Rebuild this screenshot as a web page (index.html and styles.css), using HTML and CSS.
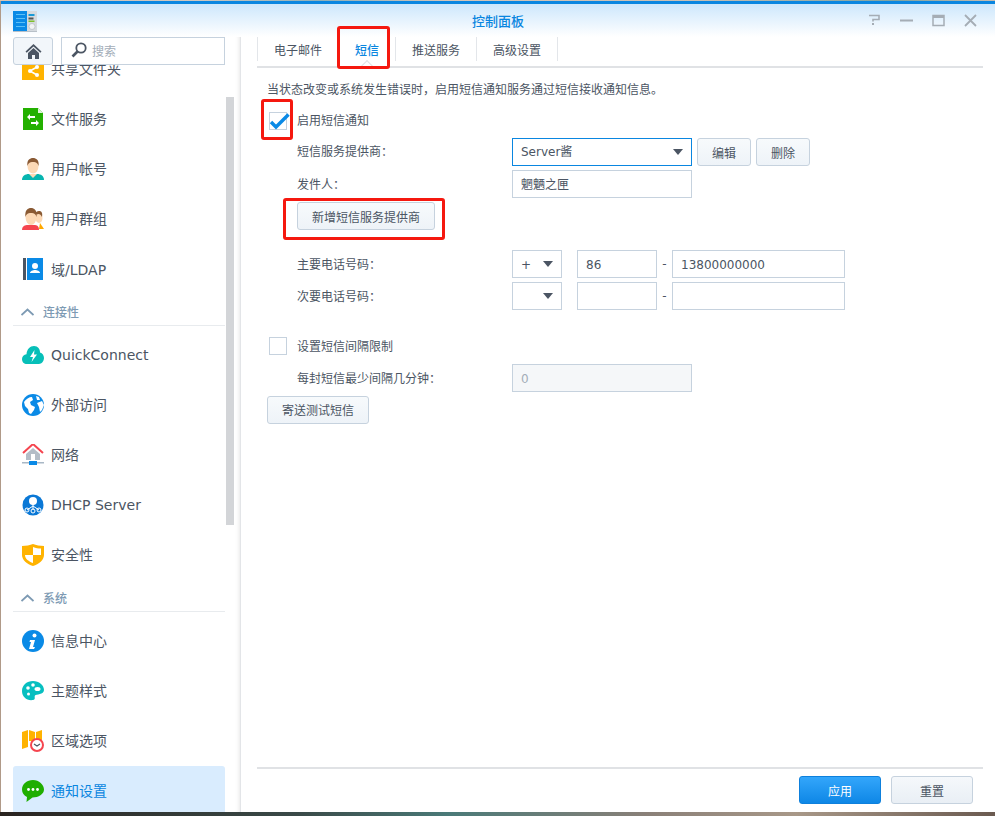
FILE: index.html
```html
<!DOCTYPE html>
<html lang="zh-CN">
<head>
<meta charset="utf-8">
<title>控制面板</title>
<link rel="stylesheet" href="styles.css">
</head>
<body>
<div class="window">
  <header class="titlebar">
    <svg class="app-icon" width="24" height="21" viewBox="0 0 24 21"><rect x="0" y="0" width="14" height="20" fill="#0a8ae6"/><path d="M3 3.500h9M3 7.500h9M3 11.500h9M3 15.500h9" stroke="#5cc0f7" stroke-width="1"/><rect x="14" y="0" width="10" height="20" fill="#d5dadf"/><rect x="15.500" y="3" width="6" height="2" fill="#1a9ad6"/><rect x="15.500" y="6.500" width="5" height="2" fill="#555"/><rect x="15.500" y="9.500" width="6" height="1.500" fill="#7fbf2a"/><circle cx="19" cy="15.500" r="3" fill="#f2f4f5" stroke="#aab2b8" stroke-width=".6"/><rect y="20" width="24" height="1" fill="#b8c0c8"/></svg>
    <h1 class="title">控制面板</h1>
    <div class="win-btns">
      <svg width="13" height="13" viewBox="0 0 13 13"><path d="M1 1.500h10v4H5v2" fill="none" stroke="#a5adb5" stroke-width="1.600"/><rect x="4" y="9" width="2" height="2" fill="#a5adb5"/></svg>
      <svg width="13" height="13" viewBox="0 0 13 13"><path d="M0 6.500h13" stroke="#a5adb5" stroke-width="2"/></svg>
      <svg width="13" height="13" viewBox="0 0 13 13"><path d="M1 1.500h11v10H1z" fill="none" stroke="#a5adb5" stroke-width="1.500"/><rect x="1" y="1" width="11" height="3" fill="#a5adb5"/></svg>
      <svg width="13" height="13" viewBox="0 0 13 13"><path d="M1 1l11 11M12 1L1 12" stroke="#a5adb5" stroke-width="1.800"/></svg>
    </div>
  </header>
  <div class="body">
    <aside class="sidebar">
      <div class="side-col">
        <div class="side-top">
          <button class="home" type="button"><svg width="17" height="17" viewBox="0 0 17 17"><path d="M8.500 1L0.500 8.500l1.200 1.200L8.500 3.500l6.800 6.200 1.200-1.200z" fill="#4b5563"/><path d="M3 10l5.500-5L14 10v6H10v-4H7v4H3z" fill="#4b5563"/></svg></button>
          <div class="search">
            <svg width="16" height="16" viewBox="0 0 16 16"><circle cx="10" cy="6" r="4.700" fill="none" stroke="#4b5563" stroke-width="1.800"/><path d="M6.500 9.500L1.500 14.500" stroke="#4b5563" stroke-width="2.600"/></svg>
            <span>搜索</span>
          </div>
        </div>
        <nav class="side-list">
          <a class="item first"><svg class="ico" width="22" height="22" viewBox="0 0 22 22"><rect y="0" width="22" height="22" fill="#ffb300"/><path d="M8 13l7-4M8 13l7 4" stroke="#fff" stroke-width="1.500"/><circle cx="8" cy="13" r="2" fill="#fff"/><circle cx="15" cy="9" r="2" fill="#fff"/><circle cx="15" cy="17" r="2" fill="#fff"/></svg><span class="t">共享文件夹</span></a>
          <a class="item"><svg class="ico" width="22" height="22" viewBox="0 0 22 22"><path d="M1 0h15l5 5v17H1z" fill="#23b000"/><path d="M16 0l5 5h-5z" fill="#dff3d8"/><path d="M5 9l3-3v2h5v2H8v2zM17 15l-3-3v2H9v2h5v2z" fill="#fff"/></svg><span class="t">文件服务</span></a>
          <a class="item"><svg class="ico" width="22" height="22" viewBox="0 0 22 22"><path d="M0 22c0-4 3-6 7-6h8c4 0 7 2 7 6z" fill="#07b5b0"/><path d="M7 16h8l-4 4z" fill="#fcd9b6"/><ellipse cx="11" cy="8" rx="5.500" ry="7.500" fill="#fcd9b6"/><path d="M5.500 8C4.500 2 8 0 11 0s6.500 2 5.500 8c-1-3-2-4-5.500-4S6.500 5 5.500 8z" fill="#8a5a34"/></svg><span class="t">用户帐号</span></a>
          <a class="item"><svg class="ico" width="22" height="22" viewBox="0 0 22 22"><ellipse cx="17" cy="10" rx="3.500" ry="5" fill="#fcd9b6"/><path d="M13 7c0-3 2-4 4-4s4 1 3 6c-1-2-2-3-3.500-3S14 7 13 7z" fill="#8a5a34"/><path d="M17 21l1-6 4 6z" fill="#ffa800"/><path d="M0 22c0-4 3-5 6-5h6c3 0 5 1 5 5z" fill="#f5454f"/><ellipse cx="9" cy="9" rx="5.500" ry="8" fill="#fcd9b6"/><path d="M3.500 9C2.500 2 6 0 9 0s6.500 2 5.500 9c-1-3-2-4-5.500-4S4.500 6 3.500 9z" fill="#8a5a34"/></svg><span class="t">用户群组</span></a>
          <a class="item"><svg class="ico" width="22" height="22" viewBox="0 0 22 22"><rect x="1" width="3" height="22" fill="#4b5563"/><rect x="5" width="16" height="22" fill="#0a8ae6"/><circle cx="13" cy="8" r="3" fill="#fff"/><path d="M8 15c0-2 3-3 5-3s5 1 5 3z" fill="#fff"/></svg><span>域/LDAP</span></a>
          <div class="group"><svg width="13" height="8" viewBox="0 0 13 8"><path d="M.5 7l6-5.500 6 5.500" fill="none" stroke="#7d9ab3" stroke-width="1.800"/></svg><span>连接性</span></div>
          <a class="item"><svg class="ico" width="22" height="22" viewBox="0 0 22 22"><path d="M5 20c-3 0-5-2-5-5 0-2.500 2-4.500 4.500-4.800C5 5 8 2 12 2c4 0 6 3 6 6.500 2.500.5 4 3 4 5.500 0 3-2.500 6-5 6z" fill="#07bfb8"/><path d="M12.500 6L8 13h3l-1.500 5L15 10.500h-3z" fill="#fff"/></svg><span>QuickConnect</span></a>
          <a class="item"><svg class="ico" width="22" height="22" viewBox="0 0 22 22"><circle cx="11" cy="11" r="11" fill="#0a8ae6"/><path d="M2 8c2-3 5-5 8-5l1 3-3 2 1 3 4 2-1 3-3 4-2-1-1-4-3-3zM14 2l3 1 1 3-3 0zM15 9l5-2 2 4-2 5-2 2-1-5z" fill="#fff"/></svg><span class="t">外部访问</span></a>
          <a class="item"><svg class="ico" width="22" height="22" viewBox="0 0 22 22"><path d="M1 9l10-9 10 9" fill="none" stroke="#f5454f" stroke-width="2"/><path d="M4 10l7-6 7 6v6H4z" fill="#b4bdc7"/><rect x="9" y="10" width="4" height="6" fill="#fff"/><rect y="18" width="22" height="1.500" fill="#a9b8c6"/><rect x="7" y="17" width="8" height="4" fill="#0a8ae6"/></svg><span class="t">网络</span></a>
          <a class="item"><svg class="ico" width="22" height="22" viewBox="0 0 22 22"><circle cx="11" cy="11" r="10.500" fill="#0a78d6"/><circle cx="11" cy="7" r="4" fill="#fff"/><path d="M11 10v6M5 16l6-4 6 4" stroke="#fff" fill="none"/><circle cx="5" cy="16" r="2" fill="none" stroke="#fff"/><circle cx="11" cy="17" r="2" fill="none" stroke="#fff"/><circle cx="17" cy="16" r="2" fill="none" stroke="#fff"/></svg><span>DHCP Server</span></a>
          <a class="item"><svg class="ico" width="22" height="22" viewBox="0 0 22 22"><path d="M0 2C4 2 8 1 11 0c3 1 7 2 11 2v9c0 5-5 9-11 11C5 20 0 16 0 11z" fill="#ffb300"/><path d="M11 3c3 1 5 1.500 8 1.500V11h-8zM3 11h8v8c-4-1.500-8-4-8-8z" fill="#fff"/></svg><span class="t">安全性</span></a>
          <div class="group"><svg width="13" height="8" viewBox="0 0 13 8"><path d="M.5 7l6-5.500 6 5.500" fill="none" stroke="#7d9ab3" stroke-width="1.800"/></svg><span>系统</span></div>
          <a class="item"><svg class="ico" width="22" height="22" viewBox="0 0 22 22"><circle cx="11" cy="11" r="11" fill="#0a8ae6"/><circle cx="12.500" cy="5.500" r="2" fill="#fff"/><path d="M8 10h5l-2 7 2 0-1 2H7l2-7H7.500z" fill="#fff"/></svg><span class="t">信息中心</span></a>
          <a class="item"><svg class="ico" width="22" height="22" viewBox="0 0 22 22"><path d="M11 1C5 1 0 5 0 11s5 10 11 9c3-.5 1-3 2-4.500S22 15 22 10C22 5 17 1 11 1z" fill="#07bfc0"/><circle cx="11" cy="5" r="1.800" fill="#fff"/><circle cx="6" cy="8" r="1.800" fill="#fff"/><circle cx="6.500" cy="14" r="1.500" fill="#fff"/><ellipse cx="15.500" cy="9" rx="3" ry="2" fill="#fff"/></svg><span class="t">主题样式</span></a>
          <a class="item"><svg class="ico" width="22" height="22" viewBox="0 0 22 22"><path d="M0 2l6-2v17l-6 2zM7 0l6 2v9H7zM14 2l6-2v11h-6z" fill="#ffb300"/><circle cx="15" cy="15" r="6" fill="#fff" stroke="#f5454f" stroke-width="2"/><path d="M12 14l3 2 3-2" fill="none" stroke="#4b5563" stroke-width="1.200"/></svg><span class="t">区域选项</span></a>
          <a class="item active"><svg class="ico" width="22" height="22" viewBox="0 0 22 22"><path d="M11 0C5 0 0 4 0 9.500c0 3.500 2 6 5 7.500l-.5 5 6-4.500c6 0 11.500-3.500 11.500-8S17 0 11 0z" fill="#1fae00"/><circle cx="6.500" cy="9.500" r="1.400" fill="#fff"/><circle cx="11" cy="9.500" r="1.400" fill="#fff"/><circle cx="15.500" cy="9.500" r="1.400" fill="#fff"/></svg><span class="t">通知设置</span></a>
        </nav>
      </div>
      <div class="scrollbar"><div class="thumb"></div></div>
    </aside>
    <main class="main">
      <div class="tabs">
        <span class="tab">电子邮件</span>
        <span class="tab on">短信</span>
        <span class="tab">推送服务</span>
        <span class="tab">高级设置</span>
      </div>
      <div class="content">
        <p class="desc">当状态改变或系统发生错误时，启用短信通知服务通过短信接收通知信息。</p>
        <div class="check-row r-enable">
          <span class="box"><svg width="22" height="20" viewBox="0 0 22 20"><path d="M3 10l5 5L20.500 2.500" fill="none" stroke="#0a8ae6" stroke-width="3.400"/></svg></span>
          <label>启用短信通知</label>
        </div>
        <div class="row r-first">
          <label class="lbl">短信服务提供商：</label>
          <div class="select focus wide"><span class="val">Server酱</span><i class="arrow"></i></div>
          <button class="btn b-small" type="button">编辑</button>
          <button class="btn b-small" type="button">删除</button>
        </div>
        <div class="row">
          <label class="lbl">发件人：</label>
          <div class="input wide cjk">魍魉之匣</div>
        </div>
        <div class="add"><button class="btn b-add" type="button">新增短信服务提供商</button></div>
        <div class="row r-phone">
          <label class="lbl">主要电话号码：</label>
          <div class="select narrow"><span class="val">+</span><i class="arrow"></i></div>
          <div class="input code">86</div>
          <span class="dash">-</span>
          <div class="input phone">13800000000</div>
        </div>
        <div class="row">
          <label class="lbl">次要电话号码：</label>
          <div class="select narrow"><span class="val"></span><i class="arrow"></i></div>
          <div class="input code"></div>
          <span class="dash">-</span>
          <div class="input phone"></div>
        </div>
        <div class="check-row r-limit">
          <span class="box"></span>
          <label>设置短信间隔限制</label>
        </div>
        <div class="row r-min">
          <label class="lbl">每封短信最少间隔几分钟：</label>
          <div class="input wide disabled">0</div>
        </div>
        <button class="btn b-test" type="button">寄送测试短信</button>
      </div>
      <footer class="footer">
        <button class="btn primary" type="button">应用</button>
        <button class="btn reset" type="button">重置</button>
      </footer>
    </main>
  </div>
  <i class="mark m-tab"></i>
  <i class="mark m-check"></i>
  <i class="mark m-add"></i>
</div>
</body>
</html>
```
FILE: styles.css
```css
* { box-sizing: border-box; }
html, body { margin: 0; height: 100%; }
body {
  overflow: hidden;
  font-family: "DejaVu Sans", "Noto Sans CJK SC", sans-serif;
  font-size: 12px;
  color: #4b5563;
  background:
    linear-gradient(90deg, #d8c4b4 0, #cfc8c0 20%, #8fb0b8 32%, #d6c6b8 45%, #c9c0b4 70%, #7fa3a0 90%, #c8bdb0 100%) top / 100% 1px no-repeat,
    linear-gradient(90deg, #2a2420 0, #3a4a48 30%, #4a7a78 45%, #8a8078 65%, #a89888 80%, #6a5a50 100%) bottom / 100% 4px no-repeat,
    #b09a88;
}
.window {
  position: relative;
  margin: 1px 0 0 1px;
  height: 811px;
  background: #fff;
  border-top: 3px solid #0a86e0;
  display: flex;
  flex-direction: column;
  overflow: hidden;
}
.titlebar {
  height: 33px;
  flex: none;
  display: flex;
  align-items: center;
  padding: 0 18px 0 12px;
  background: linear-gradient(#cde7fc, #fff);
  position: relative;
}
.app-icon { flex: none; margin-top: 1px; }
.title {
  position: absolute;
  left: 0; right: 0;
  margin: 0;
  text-align: center;
  font-size: 13px;
  font-weight: 500;
  color: #0a86e0;
}
.win-btns { margin-left: auto; display: flex; gap: 19px; position: relative; }
.body { flex: 1; min-height: 0; display: flex; }

.sidebar {
  width: 240px;
  flex: none;
  display: flex;
  padding-left: 12px;
  border-right: 1px solid #e3e5e8;
  box-shadow: inset -5px 0 5px -5px #ddd;
}
.side-col { width: 212px; flex: none; display: flex; flex-direction: column; min-height: 0; }
.side-top { display: flex; gap: 8px; height: 28px; flex: none; position: relative; z-index: 1; background: #fff; }
.home {
  width: 40px; height: 28px; padding: 0;
  display: flex; align-items: center; justify-content: center;
  background: #f2f6fa;
  border: 1px solid #c6d2de;
  border-radius: 3px;
}
.search {
  flex: 1;
  display: flex; align-items: center; gap: 5px;
  padding: 0 0 2px 9px;
  border: 1px solid #c6d2de;
  color: #a3adb8;
}
.side-list { flex: 1; min-height: 0; overflow: hidden; }
.item {
  height: 50px;
  display: flex; align-items: center;
  padding-left: 9px;
  font-size: 14px;
  color: #4b5563;
}
.item.first { margin-top: -21px; }
.t { padding-bottom: 2px; }
.ico { flex: none; margin-right: 7px; }
.item.active { background: #d9ecfe; color: #0a86e0; border-radius: 3px; }
.group {
  height: 32px;
  margin-bottom: 4px;
  display: flex; align-items: center; gap: 9px;
  padding: 4px 0 0 8px;
  border-bottom: 1px solid #e8ebee;
  color: #7d9ab3;
  font-size: 12px;
  font-weight: 500;
}
.scrollbar { width: 8px; margin-left: 1px; flex: none; }
.thumb { margin-top: 60px; height: 428px; background: #d3d5d8; }

.main { flex: 1; min-width: 0; display: flex; flex-direction: column; padding: 0 12px 0 16px; }
.tabs {
  height: 31px;
  flex: none;
  display: flex;
  border-bottom: 2px solid #e0e2e5;
  align-items: flex-start;
  position: relative;
}
.tab {
  width: 81px;
  height: 24px;
  display: flex; align-items: center; justify-content: center;
  border-right: 1px solid #e3e6ea;
  color: #4b5563;
}
.tabs .tab:first-child { width: 82px; border-left: 1px solid #e3e6ea; }
.tabs .tab:nth-child(2) { width: 57px; font-weight: 500; color: #0a86e0; position: relative; }
.tab.on::after {
  content: "";
  position: absolute;
  left: 23px; top: 25px;
  width: 9px; height: 9px;
  background: #fff;
  border: 1px solid #e0e2e5;
  border-width: 1px 0 0 1px;
  transform: rotate(45deg);
}
.content { flex: 1; padding: 12px 0 0 10px; }
.desc { margin: 0; height: 20px; line-height: 20px; }
.check-row { display: flex; align-items: center; height: 18px; }
.check-row label { padding-bottom: 2px; }
.r-enable { margin: 12px 0 0 2px; }
.r-enable label { padding-bottom: 4px; }
.r-limit { margin: 27px 0 0 2px; }
.box {
  width: 18px; height: 18px;
  margin-right: 10px;
  position: relative;
  border: 1px solid #c6d2de;
  background: #fff;
  flex: none;
}
.box svg { position: absolute; left: -2px; top: -1px; }
.row { display: flex; align-items: center; height: 28px; margin-top: 4px; padding-left: 30px; }
.r-first { margin-top: 8px; }
.r-phone { margin-top: 20px; }
.r-min { margin-top: 9px; }
.lbl { width: 215px; flex: none; padding-bottom: 2px; }
.r-first .lbl { padding-bottom: 4px; }
.select, .input {
  height: 28px;
  border: 1px solid #c6d2de;
  background: #fff;
  display: flex; align-items: center;
  padding: 2px 0 0 8px;
}
.input.cjk { padding: 0 0 2px 8px; }
.select { justify-content: space-between; padding: 0 8px; }
.select .val { padding-top: 2px; }
.select.focus { border-color: #0a86e0; }
.select.focus .val { padding: 0 0 4px; }
.wide { width: 180px; }
.narrow { width: 50px; }
.arrow { width: 0; height: 0; border: 5.500px solid transparent; border-top: 6px solid #4b5563; border-bottom: 0; }
.code { width: 80px; margin-left: 15px; }
.phone { width: 173px; }
.dash { width: 15px; text-align: center; flex: none; }
.disabled { background: #f5f7f9; color: #a3adb8; }
.btn {
  font: inherit;
  height: 28px;
  padding: 0;
  color: #4b5563;
  background: linear-gradient(#f7fafc, #eef3f8);
  border: 1px solid #c6d2de;
  border-radius: 3px;
}
.b-small { width: 54px; margin-left: 5px; }
.add { margin-top: 4px; padding-left: 30px; }
.b-add { width: 138px; }
.b-test { width: 102px; margin-top: 4px; padding-bottom: 2px; }
.footer {
  height: 45px;
  flex: none;
  border-top: 2px solid #e0e2e5;
  display: flex;
  justify-content: flex-end;
  gap: 10px;
  padding: 7px 10px 0 0;
}
.primary { width: 82px; color: #fff; background: linear-gradient(#33a6fb, #0e87e6); border-color: #0e80dc; }
.reset { width: 82px; background: linear-gradient(#f5f8fb, #e9eff5); }

.mark { position: absolute; border: 3px solid #f5180f; border-radius: 3px; pointer-events: none; z-index: 2; }
.m-tab { left: 336px; top: 22px; width: 53px; height: 43px; }
.m-check { left: 260px; top: 95px; width: 32px; height: 41px; }
.m-add { left: 282px; top: 194px; width: 162px; height: 42px; }
```
